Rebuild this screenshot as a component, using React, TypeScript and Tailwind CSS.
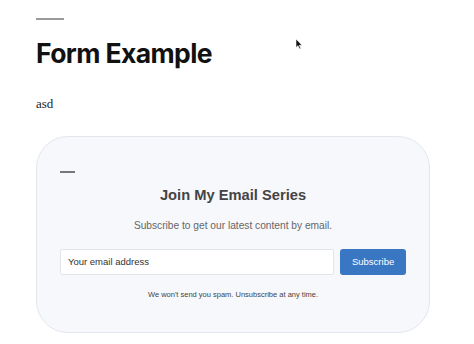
import React from "react";

export default function App() {
  return (
    <div className="relative w-[474px] h-[344px] overflow-hidden bg-white">
      <div className="pl-[36px] pr-[44px] pt-[18px]">
        <div className="w-[28px] h-[2px] bg-[#9a9a9a]" />
        <h1 className="mt-[16px] text-[26.5px] leading-[34px] font-bold tracking-[-0.6px] text-[#111] font-['Inter',sans-serif]">
          Form Example
        </h1>
        <p className="mt-[26px] text-[13px] leading-[16px] text-[#222] font-['Liberation_Serif',serif]">asd</p>
        <div className="mt-[24px] w-[394px] h-[197px] rounded-[32px] border border-[#e3e6ec] bg-[#f6f8fc] px-[23px] pt-[34px]">
          <div className="w-[15px] h-[2px] bg-[#777]" />
          <h2 className="mt-[12px] text-center text-[14.7px] leading-[20px] font-bold text-[#444] font-['Liberation_Sans',Arial,sans-serif]">
            Join My Email Series
          </h2>
          <p className="mt-[14px] text-center text-[10.2px] leading-[14px] text-[#666] font-['Liberation_Sans',Arial,sans-serif]">
            Subscribe to get our latest content by email.
          </p>
          <div className="mt-[16px] flex gap-[6px] font-['Liberation_Sans',Arial,sans-serif]">
            <div className="w-[275px] h-[26px] bg-white border border-[#e2e5ea] rounded-[2px] flex items-center pl-[7px] text-[9.5px] text-[#333]">
              Your email address
            </div>
            <div className="w-[66px] h-[26px] rounded-[3px] bg-[#3a77c3] flex items-center justify-center text-[9.5px] text-white">
              Subscribe
            </div>
          </div>
          <p className="mt-[15px] text-center text-[7.5px] leading-[10px] text-[#444] font-['Liberation_Sans',Arial,sans-serif]">
            We won&apos;t send you spam. Unsubscribe at any time.
          </p>
        </div>
      </div>
      <svg className="absolute left-[295px] top-[38px]" width="8" height="12" viewBox="0 0 8 12">
        <path d="M1 1 L1 9.5 L3 7.7 L4.6 11 L5.8 10.4 L4.3 7.2 L7 7.2 Z" fill="#111" stroke="#fff" strokeWidth="0.6" />
      </svg>
    </div>
  );
}
